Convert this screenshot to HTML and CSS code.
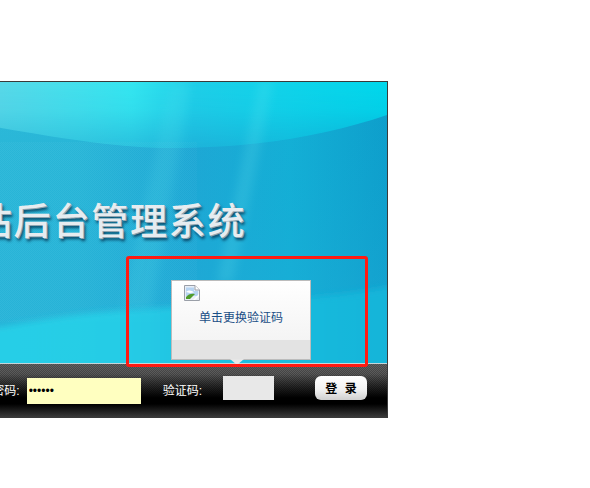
FILE: index.html
```html
<!DOCTYPE html>
<html lang="zh">
<head>
<meta charset="utf-8">
<title>网站后台管理系统</title>
<link rel="stylesheet" href="styles.css">
</head>
<body>
<main class="login">
  <section class="hero">
    <svg class="art" viewBox="-304 0 690 281" preserveAspectRatio="none" aria-hidden="true">
      <defs>
        <linearGradient id="base" x1="0" y1="0" x2="1" y2="0">
          <stop offset="0" stop-color="#35bedb"/>
          <stop offset=".55" stop-color="#2bb8d8"/>
          <stop offset=".72" stop-color="#1fa8d5"/>
          <stop offset=".86" stop-color="#14b0d6"/>
          <stop offset="1" stop-color="#0e9ecb"/>
        </linearGradient>
        <linearGradient id="fall" x1="0" y1="0" x2="0" y2="1">
          <stop offset="0" stop-color="#0ba4d0" stop-opacity="0"/>
          <stop offset=".7" stop-color="#1eaad6" stop-opacity=".35"/>
          <stop offset="1" stop-color="#1eaad6" stop-opacity=".4"/>
        </linearGradient>
        <linearGradient id="cap" x1="0" y1="0" x2="1" y2="0">
          <stop offset="0" stop-color="#72dfea"/>
          <stop offset=".44" stop-color="#58d8e8"/>
          <stop offset=".63" stop-color="#34e6f0"/>
          <stop offset=".72" stop-color="#1ecfe8"/>
          <stop offset="1" stop-color="#00d8ec"/>
        </linearGradient>
        <linearGradient id="capfade" x1="0" y1="0" x2="0" y2="1">
          <stop offset="0" stop-color="#fff"/>
          <stop offset=".4" stop-color="#fff" stop-opacity=".85"/>
          <stop offset="1" stop-color="#fff" stop-opacity=".25"/>
        </linearGradient>
        <linearGradient id="pool" x1="0" y1="0" x2="1" y2="0">
          <stop offset="0" stop-color="#2ad6ea"/>
          <stop offset=".62" stop-color="#28d0e8"/>
          <stop offset=".8" stop-color="#1cbfe0"/>
          <stop offset="1" stop-color="#16b6da"/>
        </linearGradient>
        <mask id="capmask" maskUnits="userSpaceOnUse" x="-304" y="0" width="690" height="70">
          <rect x="-304" y="0" width="690" height="70" fill="url(#capfade)"/>
        </mask>
        <filter id="soft" x="-50%" y="-10%" width="200%" height="120%">
          <feGaussianBlur stdDeviation="5"/>
        </filter>
        <filter id="edge" x="-5%" y="-20%" width="110%" height="140%">
          <feGaussianBlur stdDeviation="3"/>
        </filter>
        <pattern id="weave" width="2" height="2" patternUnits="userSpaceOnUse">
          <rect width="1" height="1" fill="#fff"/>
          <rect x="1" y="1" width="1" height="1" fill="#fff"/>
        </pattern>
      </defs>
      <rect x="-304" y="0" width="690" height="281" fill="url(#base)"/>
      <rect x="-304" y="0" width="690" height="281" fill="url(#fall)"/>
      <path d="M-304 18 C-180 22 -60 36 0 46 C70 58 120 66 170 66 C260 66 330 52 386 33 V0 H-304Z" fill="url(#cap)" mask="url(#capmask)"/>
      <path d="M170 0 H190 L150 230 H120Z" fill="#5fe6f0" opacity=".15" filter="url(#soft)"/>
      <path d="M258 0 H272 L232 200 H216Z" fill="#6ee8f0" opacity=".18" filter="url(#soft)"/>
      <rect x="-304" y="60" width="500" height="180" fill="url(#weave)" opacity=".04"/>
      <path d="M-304 270 C-180 262 -70 252 0 245 C50 236 90 230 130 228 C220 222 320 218 392 204 V290 H-320Z" fill="url(#pool)" filter="url(#edge)" opacity=".9"/>
    </svg>
    <h1 class="title">网站后台管理系统</h1>
    <div class="tip">
      <div class="tip-body">
        <svg class="broken" viewBox="0 0 16 16" aria-hidden="true">
          <path d="M.5.5H11L15.5 5V15.5H.5Z" fill="#e8eef6" stroke="#9a9fa8"/>
          <path d="M11 .5V5H15.5" fill="#fff" stroke="#9a9fa8"/>
          <path d="M2 2.5H10V6H14V11H2Z" fill="#b6d4f2"/>
          <path d="M2 7C5 4.5 8 5.5 10 7.5L6 8Z" fill="#fff"/>
          <path d="M2 14V12C4 9 8 8 11 9L6 14Z" fill="#4f9c2c"/>
          <path d="M9 15L15 9V11L11 15Z" fill="#fff"/>
        </svg>
        <p class="tip-text">单击更换验证码</p>
      </div>
      <div class="tip-foot"></div>
      <span class="tip-arrow"></span>
    </div>
    <div class="mark"></div>
  </section>
  <form class="bar">
    <label class="field-label">用户名:</label>
    <input class="text-input" type="text" value="admin">
    <label class="field-label pwd-label">密码:</label>
    <input class="text-input" type="password" value="123456">
    <label class="field-label code-label">验证码:</label>
    <input class="code-input" type="text">
    <button class="submit" type="button">登 录</button>
  </form>
</main>
</body>
</html>
```
FILE: styles.css
```css
html, body {
  margin: 0;
  height: 100%;
  overflow: hidden;
  background: #fff;
}
body {
  font-family: "Liberation Sans", "Noto Sans CJK SC", sans-serif;
  font-size: 12px;
}
.login {
  width: 690px;
  height: 335px;
  margin: 81px 0 0 -304px;
  border: 1px solid #3a3a3a;
  display: flex;
  flex-direction: column;
}
.hero {
  position: relative;
  flex: 0 0 281px;
  border-bottom: 1px solid #c6d6da;
}
.art {
  position: absolute;
  inset: 0;
  width: 100%;
  height: 100%;
}
.title {
  position: relative;
  margin: 0;
  padding: 113px 0 0 239px;
  font: 500 37px/48px "Noto Sans CJK SC", sans-serif;
  letter-spacing: 1.8px;
  color: #e6ecf0;
  text-shadow: 1px 1px 0 #8fa4b0, 2px 3px 3px rgba(0, 40, 70, .8);
  white-space: nowrap;
}
.tip {
  position: absolute;
  left: 474px;
  top: 198px;
  width: 138px;
  height: 78px;
  border: 1px solid #bcbcbc;
  display: flex;
  flex-direction: column;
}
.tip-body {
  flex: 1;
  background: linear-gradient(#fff, #f4f4f4);
  padding: 4px 0 0 12px;
}
.broken {
  display: block;
  width: 16px;
  height: 16px;
}
.tip-text {
  margin: 9px 0 0 -12px;
  text-align: center;
  color: #1b4f86;
  line-height: 16px;
}
.tip-foot {
  flex: 0 0 19px;
  background: #e3e3e3;
}
.tip-arrow {
  position: absolute;
  left: 58px;
  top: 78px;
  width: 0;
  height: 0;
  border-left: 7px solid transparent;
  border-right: 7px solid transparent;
  border-top: 6px solid #e6e6e6;
}
.mark {
  position: absolute;
  left: 429px;
  top: 174px;
  width: 236px;
  height: 105px;
  border: 3px solid #ff1a12;
  border-radius: 3px;
}
.bar {
  flex: 1;
  display: flex;
  align-items: flex-start;
  justify-content: flex-end;
  padding: 12px 20px 0 0;
  background:
    linear-gradient(rgba(0, 0, 0, 0) 10px, #000 34px, #000 40px, #3a3a3a 100%),
    repeating-conic-gradient(rgba(255, 255, 255, .12) 0 25%, transparent 0 50%) 0 0 / 2px 2px,
    linear-gradient(#4c4c4c, #1a1a1a);
}
.field-label {
  color: #fff;
  line-height: 16px;
  margin-top: 7px;
  white-space: nowrap;
}
.pwd-label {
  margin-left: 24px;
}
.code-label {
  margin-left: 22px;
}
.text-input {
  width: 114px;
  height: 26px;
  box-sizing: border-box;
  border: 0;
  margin: 2px 0 0 7px;
  padding: 0 2px;
  background: #ffffc0;
  font: 12px "Liberation Sans", sans-serif;
  color: #000;
  outline: 0;
}
.code-input {
  width: 51px;
  height: 24px;
  box-sizing: border-box;
  border: 0;
  margin: 0 0 0 21px;
  padding: 0;
  background: #e8e8e8;
}
.submit {
  width: 52px;
  height: 24px;
  margin: 0 0 0 41px;
  padding: 0;
  border: 0;
  border-radius: 6px;
  background: linear-gradient(#fff, #f2f2f2 55%, #cfcfcf);
  font: 700 12px/24px "Noto Sans CJK SC", sans-serif;
  color: #000;
  word-spacing: 5px;
}
```
